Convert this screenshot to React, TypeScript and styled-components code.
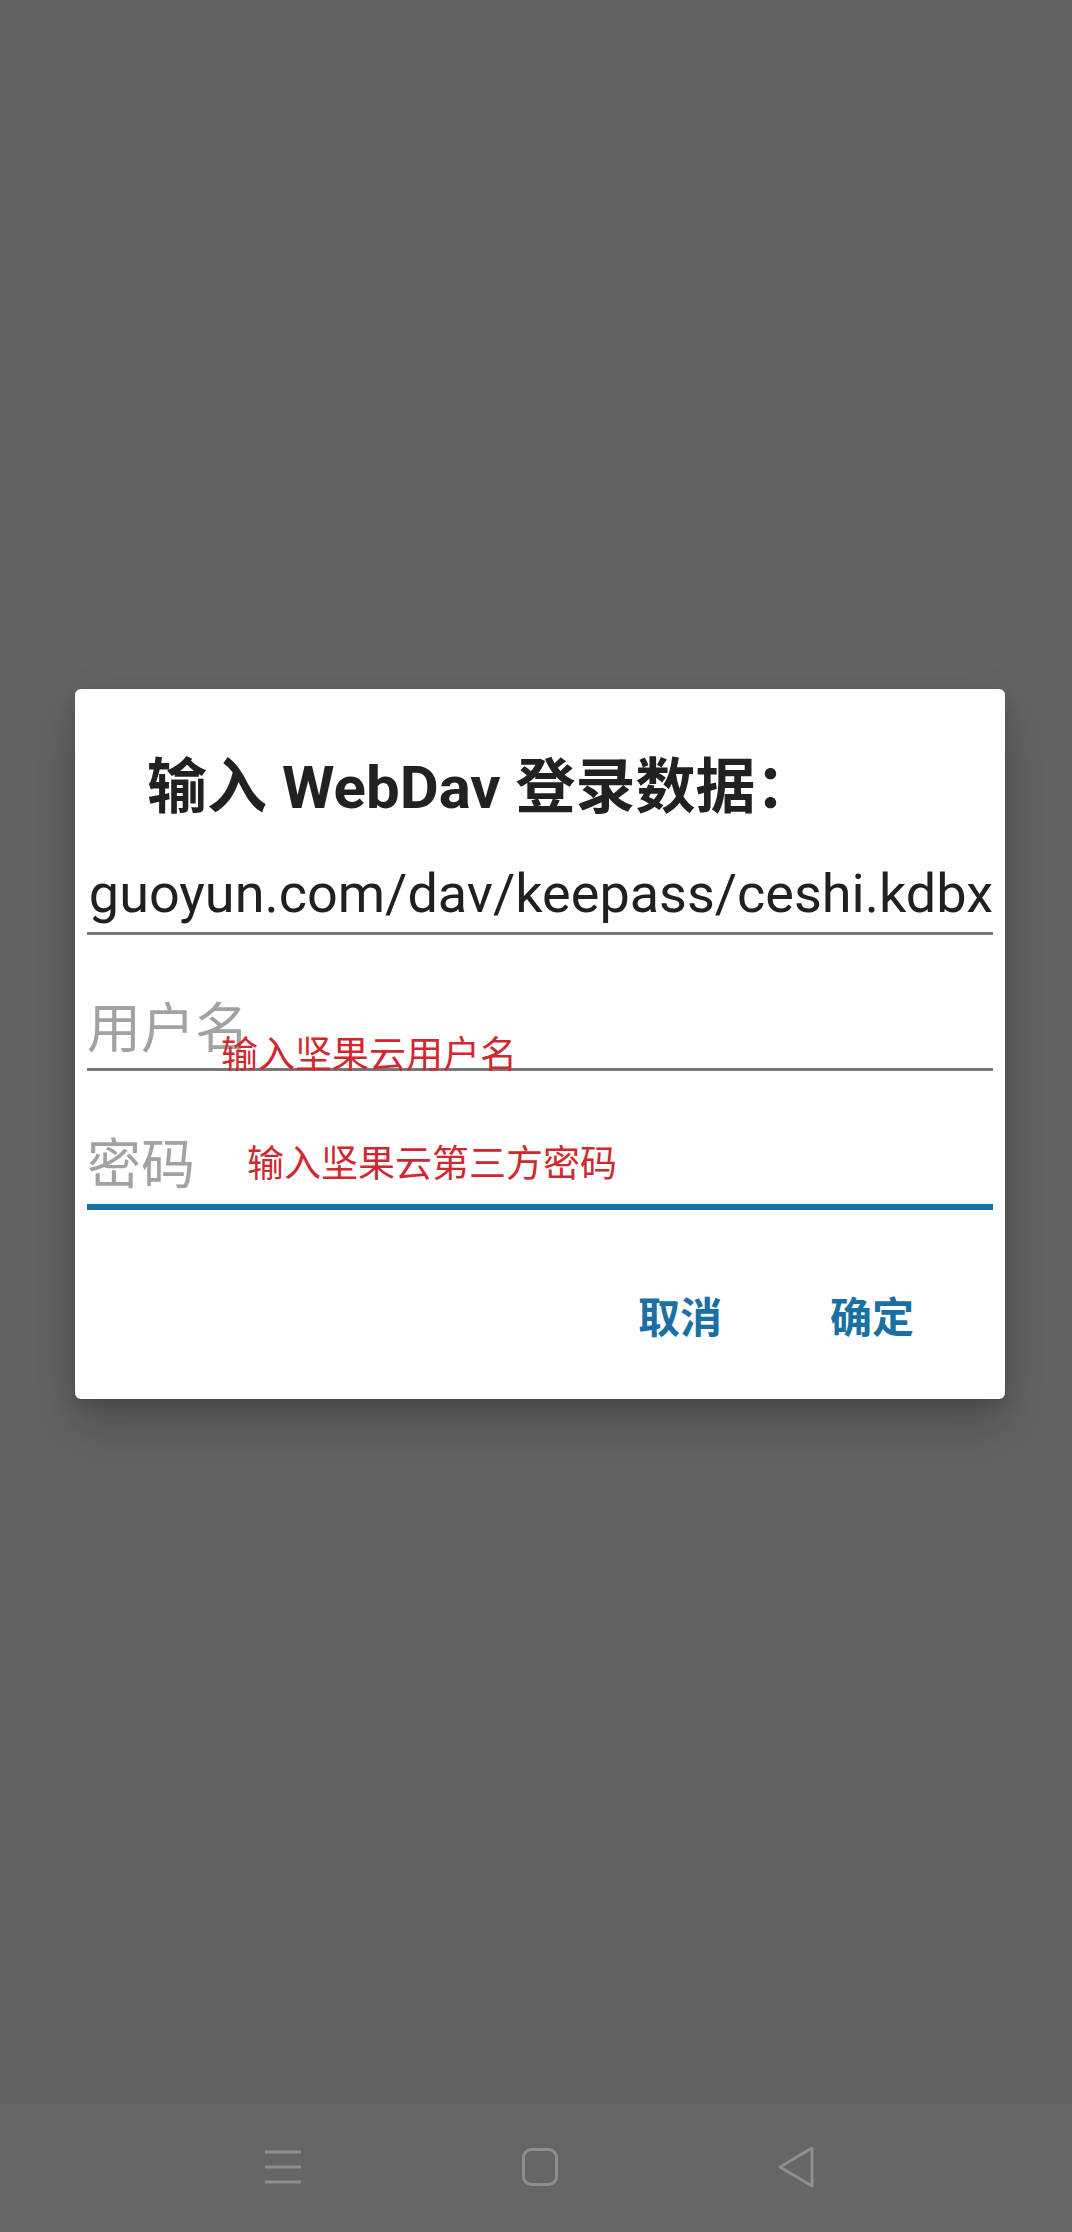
import * as React from 'react';
import styled, { createGlobalStyle } from 'styled-components';

const GlobalStyle = createGlobalStyle`
	html, body {
		margin: 0;
		padding: 0;
		background: #656465;
		font-family: Roboto, "Noto Sans CJK SC", sans-serif;
	}
`;

const Page = styled.div`
	min-height: 100vh;
	display: flex;
	flex-direction: column;
`;

const Scrim = styled.div`
	flex: 1;
	display: flex;
	align-items: flex-start;
	padding: 689px 0 0 75px;
	background: #646364;
`;

const Dialog = styled.div`
	width: 930px;
	box-sizing: border-box;
	padding: 0 12px;
	background: #ffffff;
	border-radius: 6px;
	box-shadow: 0 26px 50px rgba(0, 0, 0, 0.22), 0 6px 14px rgba(0, 0, 0, 0.12);
`;

const Title = styled.h2`
	margin: 0 0 0 60px;
	padding-top: 63px;
	font-size: 60px;
	line-height: 72px;
	font-weight: 700;
	color: #212121;
	white-space: nowrap;
`;

const Field = styled.div<{ $focused?: boolean; $gap: number }>`
	position: relative;
	margin-top: ${p => p.$gap}px;
	padding-bottom: 6px;
	border-bottom: ${p => p.$focused ? '6px solid #1a71a5' : '3px solid #777777'};
`;

const Value = styled.div`
	display: flex;
	justify-content: flex-end;
	white-space: nowrap;
	height: 64px;
	font-size: 54px;
	line-height: 64px;
	color: #202020;
`;

const Placeholder = styled.div`
	height: 64px;
	font-size: 54px;
	line-height: 64px;
	color: #a2a2a2;
	white-space: nowrap;
`;

// red hint written over the screenshot
const Note = styled.span<{ $left: number; $top: number }>`
	position: absolute;
	left: ${p => p.$left}px;
	top: ${p => p.$top}px;
	font-family: "Noto Sans CJK SC", sans-serif;
	font-size: 37px;
	line-height: 37px;
	color: #d0282f;
	white-space: nowrap;
`;

const ButtonBar = styled.div`
	display: flex;
	justify-content: flex-end;
	padding: 49px 25px 20px 0;
`;

const DialogButton = styled.button`
	width: 192px;
	height: 120px;
	padding: 0;
	border: none;
	background: none;
	font-family: Roboto, "Noto Sans CJK SC", sans-serif;
	font-size: 42px;
	line-height: 120px;
	font-weight: 700;
	color: #1a6fa3;
`;

const NavBar = styled.div`
	height: 128px;
	background: #676566;
	display: grid;
	grid-template-columns: repeat(3, 257px);
	justify-content: start;
	align-items: center;
	padding-left: 154px;
`;

const NavCell = styled.div`
	display: flex;
	justify-content: center;
	align-items: center;
	height: 128px;
	margin-top: -2px;
`;

const navColor = '#8f8d8e';

const MenuIcon = () => (
	<svg width="40" height="40" viewBox="0 0 40 40">
		<g stroke={navColor} strokeWidth="3">
			<line x1="2" y1="5" x2="38" y2="5" />
			<line x1="2" y1="20" x2="38" y2="20" />
			<line x1="2" y1="35" x2="38" y2="35" />
		</g>
	</svg>
);

const HomeIcon = () => (
	<svg width="40" height="40" viewBox="0 0 40 40">
		<rect x="3.5" y="2.5" width="33" height="35" rx="8" fill="none" stroke={navColor} strokeWidth="3" />
	</svg>
);

const BackIcon = () => (
	<svg width="40" height="44" viewBox="0 0 40 44">
		<path d="M35 3 L35 41 L3 22 Z" fill="none" stroke={navColor} strokeWidth="3" strokeLinejoin="round" />
	</svg>
);

export default function App() {
	return (
		<Page>
			<GlobalStyle />
			<Scrim>
				<Dialog>
					<Title>输入 WebDav 登录数据：</Title>
					<Field $gap={38}>
						<Value>
							<span>guoyun.com/dav/keepass/ceshi.kdbx</span>
						</Value>
					</Field>
					<Field $gap={63}>
						<Placeholder>用户名</Placeholder>
						<Note $left={134} $top={36}>输入坚果云用户名</Note>
					</Field>
					<Field $gap={63} $focused>
						<Placeholder>密码</Placeholder>
						<Note $left={160} $top={9}>输入坚果云第三方密码</Note>
					</Field>
					<ButtonBar>
						<DialogButton>取消</DialogButton>
						<DialogButton>确定</DialogButton>
					</ButtonBar>
				</Dialog>
			</Scrim>
			<NavBar>
				<NavCell><MenuIcon /></NavCell>
				<NavCell><HomeIcon /></NavCell>
				<NavCell><BackIcon /></NavCell>
			</NavBar>
		</Page>
	);
}
